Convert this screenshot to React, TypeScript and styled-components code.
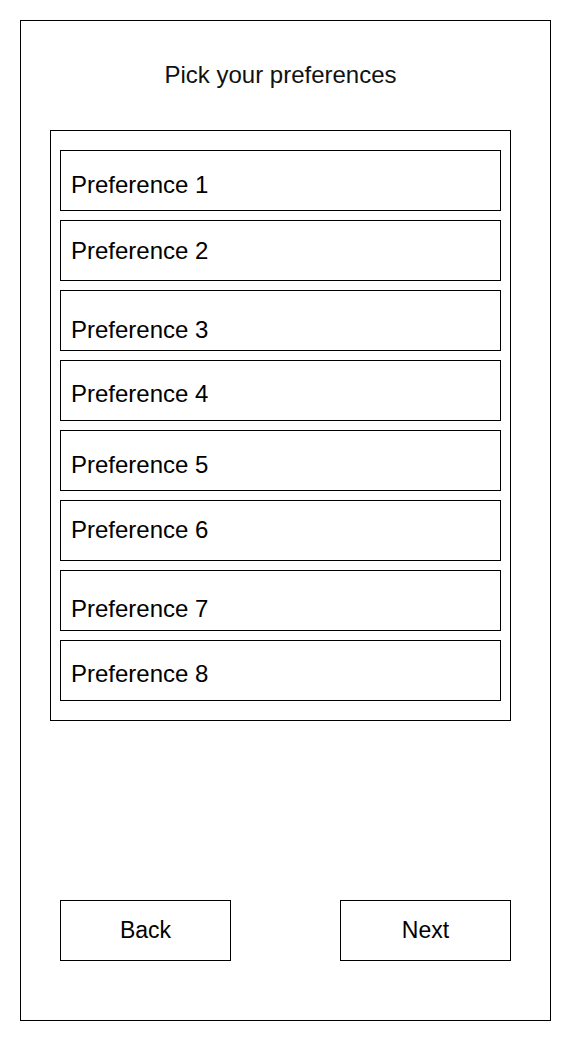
import { createGlobalStyle, styled } from "styled-components";

const GlobalStyle = createGlobalStyle`
  html, body {
    margin: 0;
    padding: 0;
    background: #ffffff;
  }
  body {
    font-family: "Liberation Sans", Arial, sans-serif;
    color: #000000;
  }
`;

const Frame = styled.div`
  box-sizing: border-box;
  width: 531px;
  height: 1001px;
  margin: 20px 0 0 20px;
  border: 1px solid #000;
  padding: 40px 0 59px;
  display: flex;
  flex-direction: column;
`;

const Title = styled.h1`
  margin: 0 0 0 29px;
  width: 461px;
  font-size: 24px;
  font-weight: 400;
  line-height: 28px;
  text-align: center;
  color: #111;
`;

const List = styled.div`
  box-sizing: border-box;
  width: 461px;
  margin: 41px 0 0 29px;
  border: 1px solid #000;
  padding: 19px 9px;
  display: flex;
  flex-direction: column;
  gap: 9px;
`;

const Item = styled.div<{ $shift: number }>`
  box-sizing: border-box;
  height: 61px;
  border: 1px solid #000;
  padding: ${(p) => Math.max(0, p.$shift * 2)}px 10px
    ${(p) => Math.max(0, -p.$shift * 2)}px;
  display: flex;
  align-items: center;
  font-size: 24px;
`;

const Actions = styled.div`
  margin-top: auto;
  padding: 0 39px;
  display: flex;
  justify-content: space-between;
`;

const Button = styled.button`
  box-sizing: border-box;
  width: 171px;
  height: 61px;
  border: 1px solid #000;
  border-radius: 0;
  background: #fff;
  color: #000;
  font-family: "Liberation Sans", Arial, sans-serif;
  font-size: 23px;
  padding: 0;
  cursor: pointer;
`;

// vertical nudge of each label inside its box, as in the mockup
const prefs = [
  { label: "Preference 1", shift: 4 },
  { label: "Preference 2", shift: 0 },
  { label: "Preference 3", shift: 9 },
  { label: "Preference 4", shift: 3 },
  { label: "Preference 5", shift: 4 },
  { label: "Preference 6", shift: -1 },
  { label: "Preference 7", shift: 8 },
  { label: "Preference 8", shift: 3 },
];

export default function App() {
  return (
    <>
      <GlobalStyle />
      <Frame>
        <Title>Pick your preferences</Title>
        <List>
          {prefs.map((p) => (
            <Item key={p.label} $shift={p.shift}>
              {p.label}
            </Item>
          ))}
        </List>
        <Actions>
          <Button type="button">Back</Button>
          <Button type="button">Next</Button>
        </Actions>
      </Frame>
    </>
  );
}
